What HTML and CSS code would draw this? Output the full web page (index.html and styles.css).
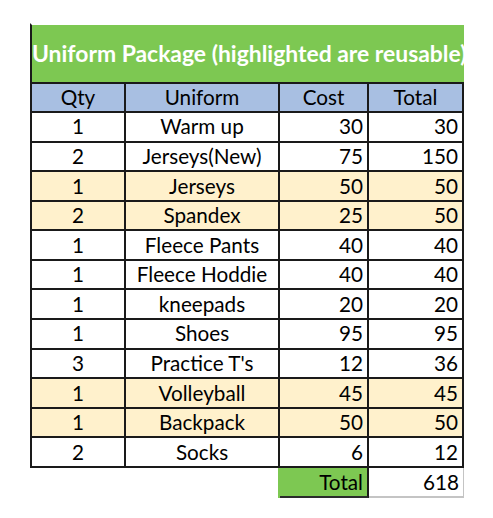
FILE: index.html
```html
<!DOCTYPE html>
<html lang="en">
<head>
<meta charset="utf-8">
<title>Uniform Package</title>
<link rel="stylesheet" href="styles.css">
</head>
<body>
<table class="sheet">
  <colgroup>
    <col class="w-qty">
    <col class="w-item">
    <col class="w-cost">
    <col class="w-total">
  </colgroup>
  <tbody>
    <tr class="title-row">
      <td class="title" colspan="4"><div class="title-text">Uniform Package (highlighted are reusable)</div></td>
    </tr>
    <tr class="head-row">
      <th class="c-qty">Qty</th>
      <th class="c-item">Uniform</th>
      <th class="c-cost">Cost</th>
      <th class="c-total">Total</th>
    </tr>
    <tr class="row"><td class="c-qty">1</td><td class="c-item">Warm up</td><td class="c-cost num">30</td><td class="c-total num">30</td></tr>
    <tr class="row"><td class="c-qty">2</td><td class="c-item">Jerseys(New)</td><td class="c-cost num">75</td><td class="c-total num">150</td></tr>
    <tr class="row reuse"><td class="c-qty">1</td><td class="c-item">Jerseys</td><td class="c-cost num">50</td><td class="c-total num">50</td></tr>
    <tr class="row reuse"><td class="c-qty">2</td><td class="c-item">Spandex</td><td class="c-cost num">25</td><td class="c-total num">50</td></tr>
    <tr class="row"><td class="c-qty">1</td><td class="c-item">Fleece Pants</td><td class="c-cost num">40</td><td class="c-total num">40</td></tr>
    <tr class="row"><td class="c-qty">1</td><td class="c-item">Fleece Hoddie</td><td class="c-cost num">40</td><td class="c-total num">40</td></tr>
    <tr class="row"><td class="c-qty">1</td><td class="c-item">kneepads</td><td class="c-cost num">20</td><td class="c-total num">20</td></tr>
    <tr class="row"><td class="c-qty">1</td><td class="c-item">Shoes</td><td class="c-cost num">95</td><td class="c-total num">95</td></tr>
    <tr class="row"><td class="c-qty">3</td><td class="c-item">Practice T's</td><td class="c-cost num">12</td><td class="c-total num">36</td></tr>
    <tr class="row reuse"><td class="c-qty">1</td><td class="c-item">Volleyball</td><td class="c-cost num">45</td><td class="c-total num">45</td></tr>
    <tr class="row reuse"><td class="c-qty">1</td><td class="c-item">Backpack</td><td class="c-cost num">50</td><td class="c-total num">50</td></tr>
    <tr class="row"><td class="c-qty">2</td><td class="c-item">Socks</td><td class="c-cost num">6</td><td class="c-total num">12</td></tr>
    <tr class="sum-row">
      <td class="blank" colspan="2"></td>
      <td class="sum-label">Total</td>
      <td class="sum-value">618</td>
    </tr>
  </tbody>
</table>
</body>
</html>
```

FILE: styles.css
```css
html, body {
  margin: 0;
  padding: 0;
  background: #ffffff;
}

body {
  width: 493px;
  height: 518px;
  font-family: "Lato", "Carlito", "Liberation Sans", sans-serif;
  color: #000;
}

.sheet {
  margin: 23px 0 0 30px;
  border-collapse: separate;
  border-spacing: 0;
  table-layout: fixed;
  width: 434px;
  font-size: 20.7px;
}

.w-qty { width: 96px; }
.w-item { width: 154px; }
.w-cost { width: 89px; }
.w-total { width: 95px; }

.sheet td,
.sheet th {
  box-sizing: border-box;
  padding: 0 4px;
  border-right: 2px solid #1a1a1a;
  border-bottom: 2px solid #1a1a1a;
  font-weight: 400;
  text-align: center;
  vertical-align: middle;
  white-space: nowrap;
  line-height: 1;
  overflow: hidden;
}

.sheet .c-qty { border-left: 2px solid #1a1a1a; }

.sheet .num { text-align: right; }

.title-row { height: 61px; }

.sheet .title {
  padding: 0;
  background: #7dc852;
  border-top: 2px solid #ffffff;
  border-left: 2px solid #1a1a1a;
  border-right: 0;
  border-bottom: 2px solid #1a1a1a;
  text-align: left;
}

.title-text {
  width: 432px;
  overflow: hidden;
  white-space: nowrap;
  color: #ffffff;
  font-weight: 700;
  font-size: 22.9px;
  line-height: 1.4;
}

.head-row { height: 29px; }
.head-row th { background: #a8bfe2; }

.row { height: 29.58px; }
.row td { background: #ffffff; }
.row.reuse td { background: #fff1cc; }

.sum-row { height: 30px; }

.sheet .blank {
  border: 0;
  border-right: 2px solid #7dc852;
  background: #ffffff;
}

.sheet .sum-label {
  background: #7dc852;
  text-align: right;
  border-right: 2px solid #1a1a1a;
  border-bottom: 2px solid #2a2a2a;
}

.sheet .sum-value {
  background: #ffffff;
  text-align: right;
  border-right: 1px solid #c4c4c4;
  border-bottom: 2px solid #c4c4c4;
}
```
